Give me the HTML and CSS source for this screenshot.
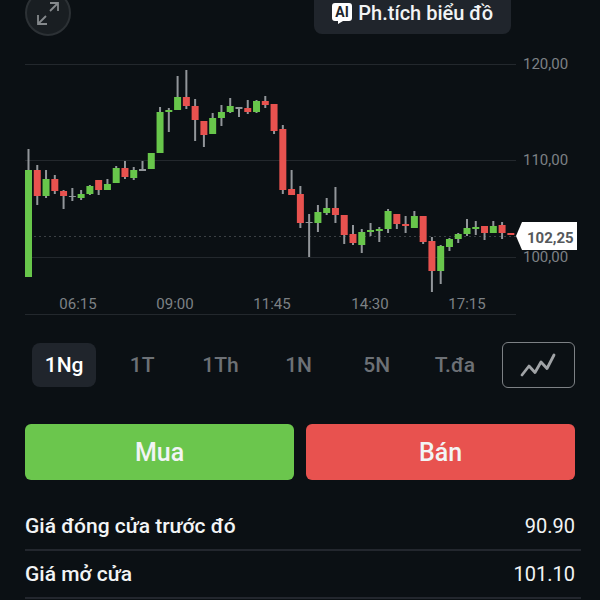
FILE: index.html
```html
<!DOCTYPE html>
<html lang="vi">

<head>
    <meta charset="UTF-8">
    <meta name="viewport" content="width=device-width, initial-scale=1.0">
    <title>Biểu đồ giá</title>
    <link rel="stylesheet" href="styles.css">
</head>

<body>
    <main class="page">
        <!-- toolbar -->
        <div class="toolbar">
            <button type="button" class="expand" aria-label="Toàn màn hình">
                <svg width="24" height="24" viewBox="0 0 24 24" fill="none" stroke="currentColor" stroke-width="1.8">
                    <path d="M14 10 22 2M14 2H22v8M10 15 2 23M2 14v9h9"></path>
                </svg>
            </button>
            <button type="button" class="analyze">
                <svg class="ai" width="20" height="21" viewBox="0 0 20 21">
                    <path d="M3 0h14a3 3 0 0 1 3 3v12a3 3 0 0 1-3 3h-6l-5 3v-3H3a3 3 0 0 1-3-3V3a3 3 0 0 1 3-3z" fill="#fff"></path>
                    <text x="10" y="14" text-anchor="middle">AI</text>
                </svg>
                Ph.tích biểu đồ
            </button>
        </div>

        <!-- candle chart -->
        <svg class="chart" viewBox="25 56 556 264">
            <g class="grid">
                <path d="M25 64.500H516M25 160.500H516M25 257.500H516M25 314.500H516"></path>
                <path class="last" d="M34 236.500H516"></path>
            </g>
            <g class="candles"></g>
            <g class="label">
                <text x="523" y="69">120,00</text>
                <text x="523" y="165">110,00</text>
                <text x="523" y="262">100,00</text>
            </g>
            <g class="label time">
                <text x="78" y="309">06:15</text>
                <text x="175" y="309">09:00</text>
                <text x="272" y="309">11:45</text>
                <text x="370" y="309">14:30</text>
                <text x="467" y="309">17:15</text>
            </g>
            <path d="M516 236 522 222H577V250H522z" fill="#fff"></path>
            <text class="price" x="527" y="243">102,25</text>
        </svg>

        <!-- time range -->
        <div class="ranges">
            <button type="button" class="range sel">1Ng</button>
            <button type="button" class="range">1T</button>
            <button type="button" class="range">1Th</button>
            <button type="button" class="range">1N</button>
            <button type="button" class="range">5N</button>
            <button type="button" class="range">T.đa</button>
            <button type="button" class="type" aria-label="Loại biểu đồ">
                <svg width="36" height="24" viewBox="0 0 36 24" fill="none" stroke="currentColor" stroke-width="2.8" stroke-linecap="round" stroke-linejoin="round">
                    <path d="M2 22 9 13 15 19.500 21 9 27 15.500 34 2"></path>
                </svg>
            </button>
        </div>

        <div class="trade">
            <button type="button" class="buy">Mua</button>
            <button type="button" class="sell">Bán</button>
        </div>

        <dl class="stats">
            <div class="row">
                <dt>Giá đóng cửa trước đó</dt>
                <dd>90.90</dd>
            </div>
            <div class="row">
                <dt>Giá mở cửa</dt>
                <dd>101.10</dd>
            </div>
        </dl>
    </main>
    <script>
        // [wick top, body top, body bottom, wick bottom, kind]
        let data = [
            [149, 170, 277, 277, 'up'], [165, 170, 196, 205, 'down'], [170, 179, 196, 198, 'up'],
            [175, 179, 191, 194, 'down'], [190, 191, 196, 209, 'down'], [188, 196, 197, 201, 'flat'],
            [190, 194, 198, 200, 'up'], [185, 186, 194, 195, 'up'], [180, 180, 190, 195, 'down'],
            [179, 184, 190, 190, 'up'], [166, 168, 183, 183, 'up'], [161, 168, 177, 179, 'down'],
            [167, 170, 178, 180, 'up'], [161, 169, 171, 171, 'flat'], [153, 153, 169, 169, 'up'],
            [107, 112, 153, 153, 'up'], [108, 110, 112, 132, 'up'], [76, 97, 110, 110, 'up'],
            [70, 97, 106, 109, 'down'], [99, 106, 120, 141, 'down'], [121, 121, 135, 147, 'down'],
            [113, 118, 134, 134, 'up'], [105, 112, 118, 126, 'up'], [98, 106, 112, 113, 'up'],
            [107, 107, 109, 117, 'flat'], [100, 108, 112, 114, 'down'], [100, 101, 112, 113, 'up'],
            [96, 101, 105, 108, 'down'], [104, 104, 131, 134, 'down'], [125, 129, 190, 194, 'down'],
            [170, 189, 195, 195, 'down'], [186, 194, 223, 228, 'down'], [214, 222, 223, 257, 'flat'],
            [205, 212, 223, 232, 'up'], [198, 208, 213, 215, 'up'], [187, 208, 215, 223, 'down'],
            [215, 215, 235, 244, 'down'], [225, 234, 243, 245, 'down'], [229, 232, 245, 253, 'up'],
            [223, 230, 232, 236, 'up'], [227, 229, 231, 242, 'up'], [209, 211, 229, 233, 'up'],
            [214, 214, 224, 229, 'down'], [216, 224, 226, 233, 'down'], [211, 216, 228, 228, 'up'],
            [216, 216, 242, 244, 'down'], [237, 241, 271, 292, 'down'], [245, 246, 271, 284, 'up'],
            [238, 239, 247, 251, 'up'], [233, 234, 239, 243, 'up'], [219, 228, 234, 236, 'up'],
            [221, 227, 229, 235, 'up'], [226, 226, 233, 240, 'down'], [221, 226, 233, 233, 'up'],
            [222, 225, 233, 239, 'down'], [233, 233, 235, 235, 'down']
        ];
        let candles = document.querySelector('.candles');
        let html = '';
        data.forEach(function (item, index) {
            let x = 28.5 + index * 8.77;
            let [high, top, bottom, low, kind] = item;
            html += `<path class="wick" d="M${x} ${high}V${low}"></path>`;
            html += `<rect class="${kind}" x="${x - 3.5}" y="${top}" width="7" height="${bottom - top}"></rect>`;
        });
        candles.innerHTML = html;
    </script>
</body>

</html>
```
FILE: styles.css
```css
* {
    box-sizing: border-box;
}

body {
    margin: 0;
    background: #0b1014;
    color: #f2f4f5;
    font-family: Roboto, "Liberation Sans", sans-serif;
}

button {
    border: 0;
    padding: 0;
    font-family: inherit;
    font-weight: 500;
    color: inherit;
    cursor: pointer;
}

.page {
    padding: 0 19px 0 25px;
    overflow: hidden;
}

.toolbar {
    display: flex;
    justify-content: space-between;
    align-items: flex-start;
    height: 56px;
    padding-right: 70px;
}

.expand {
    display: flex;
    align-items: center;
    justify-content: center;
    width: 46px;
    height: 46px;
    margin-top: -10px;
    border: 2px solid #2c3135;
    border-radius: 50%;
    background: #191e22;
    color: #85898c;
}

.analyze {
    display: flex;
    align-items: center;
    gap: 6px;
    height: 44px;
    margin-top: -10px;
    padding: 2px 18px 0;
    border-radius: 8px;
    background: #20252c;
    font-size: 20px;
}

.ai text {
    font-size: 14px;
    font-weight: 700;
    fill: #20252c;
}

.chart {
    display: block;
    width: 100%;
}

.grid path {
    stroke: #23282d;
}

.grid .last {
    stroke: #3c4145;
    stroke-dasharray: 2 3;
}

.wick {
    stroke: #92969a;
    stroke-width: 2;
}

.up {
    fill: #68c64b;
}

.down {
    fill: #e8524f;
}

.flat {
    fill: #92969a;
}

.label {
    font-size: 15px;
    fill: #7d8185;
}

.time {
    text-anchor: middle;
}

.price {
    font-size: 15px;
    font-weight: 700;
    fill: #55585b;
}

.ranges {
    display: grid;
    grid-template-columns: repeat(6, 1fr) 81px;
    align-items: center;
    margin-top: 22px;
    padding-right: 6px;
}

.range {
    justify-self: center;
    min-width: 64px;
    height: 44px;
    border-radius: 8px;
    background: none;
    color: #6d7176;
    font-size: 21px;
}

.range.sel {
    background: #20252c;
    color: #fff;
}

.type {
    display: flex;
    align-items: center;
    justify-content: center;
    height: 46px;
    margin-left: 8px;
    border: 1px solid #7d8185;
    border-radius: 6px;
    background: none;
    color: #a0a3a6;
}

.trade {
    display: grid;
    grid-template-columns: 1fr 1fr;
    gap: 12px;
    margin-top: 36px;
    padding-right: 6px;
}

.buy,
.sell {
    height: 56px;
    border-radius: 6px;
    font-size: 25px;
}

.buy {
    background: #6bc64d;
}

.sell {
    background: #e8524f;
}

.stats {
    margin: 23px 0 0;
}

.row {
    display: flex;
    justify-content: space-between;
    align-items: center;
    height: 48px;
    padding-right: 6px;
    border-bottom: 2px solid #23272e;
}

.row dt {
    font-size: 21px;
    font-weight: 500;
}

.row dd {
    margin: 0;
    font-size: 20px;
}
```
